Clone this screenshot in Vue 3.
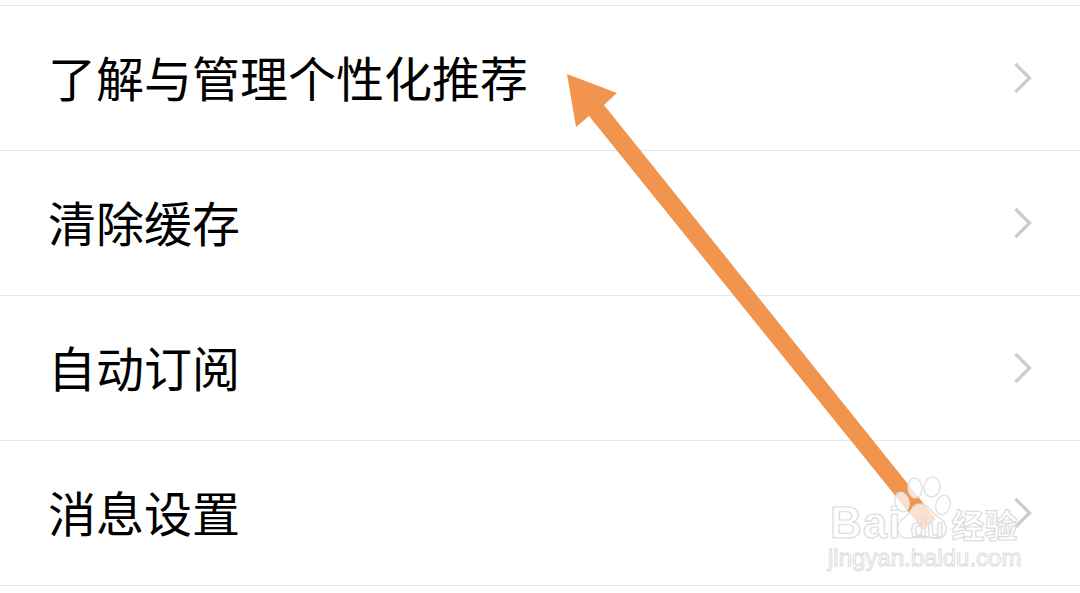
<script setup>
const rows = ['了解与管理个性化推荐', '清除缓存', '自动订阅', '消息设置']
</script>

<template>
  <div class="page">
    <ul class="list">
      <li v-for="row in rows" :key="row" class="row">
        <span class="label">{{ row }}</span>
        <svg class="chev" width="20" height="32" viewBox="0 0 20 32">
          <path d="M2.5 2 L16.5 16 L2.5 30" fill="none" stroke="#cdcdcd" stroke-width="3.4" />
        </svg>
      </li>
    </ul>

    <svg class="arrow" width="1080" height="593" viewBox="0 0 1080 593">
      <polygon points="567,74 617,93 604,105 936,519 923,530 589,116 576,127" fill="#f1954e" />
    </svg>

    <div class="mark">
      <svg class="paw" width="70" height="70" viewBox="0 0 70 70">
        <g fill="#ffffff" fill-opacity="0.72" stroke="#dedede" stroke-width="1.3">
          <ellipse cx="16" cy="26" rx="7" ry="10" transform="rotate(-15 16 26)" />
          <ellipse cx="29" cy="12" rx="7" ry="10" transform="rotate(-5 29 12)" />
          <ellipse cx="46" cy="11" rx="8" ry="10" transform="rotate(8 46 11)" />
          <ellipse cx="57" cy="29" rx="7" ry="10" transform="rotate(15 57 29)" />
          <path d="M34 28 C26 28 25 37 18 42 C8 49 10 62 22 62 C28 62 31 60 36 60 C42 60 46 63 52 62 C64 60 62 46 52 41 C45 37 44 28 34 28 Z" />
        </g>
      </svg>
      <div class="mark-top">
        <span class="bai">Bai</span>
        <span class="du">du</span>
        <span class="jy">经验</span>
      </div>
      <div class="mark-url">jingyan.baidu.com</div>
    </div>
  </div>
</template>

<style scoped>
.page {
  position: relative;
  width: 1080px;
  height: 593px;
  background: #fff;
  overflow: hidden;
  padding-top: 5px;
  box-sizing: border-box;
}
.list {
  list-style: none;
  margin: 0;
  padding: 0;
  border-top: 1px solid #e6e6e6;
}
.row {
  height: 144px;
  border-bottom: 1px solid #e6e6e6;
  display: flex;
  align-items: center;
  justify-content: space-between;
  padding: 0 47px 0 48px;
}
.label {
  font-family: "Noto Sans CJK SC", "Noto Sans", sans-serif;
  font-size: 48px;
  line-height: 1;
  color: #000;
  margin-top: -4px;
}
.chev {
  display: block;
}
.arrow {
  position: absolute;
  left: 0;
  top: 0;
}
.mark {
  position: absolute;
  left: 828px;
  top: 476px;
  width: 200px;
  height: 100px;
}
.paw {
  position: absolute;
  left: 58px;
  top: 0;
}
.mark-top {
  position: absolute;
  left: 2px;
  top: 24px;
  display: flex;
  align-items: baseline;
  font-family: "Liberation Sans", sans-serif;
  font-weight: 700;
  color: #fff;
  -webkit-text-stroke: 1.2px #dcdcdc;
}
.bai {
  font-size: 44px;
  line-height: 46px;
  letter-spacing: 1px;
}
.du {
  font-size: 27px;
  line-height: 46px;
  margin-left: 9px;
  color: transparent;
}
.jy {
  font-family: "Noto Sans CJK SC", sans-serif;
  font-size: 33px;
  line-height: 46px;
  margin-left: 8px;
}
.mark-url {
  position: absolute;
  left: 0;
  top: 69px;
  font-family: "Liberation Sans", sans-serif;
  font-size: 24px;
  line-height: 26px;
  color: #fff;
  -webkit-text-stroke: 1px #dcdcdc;
  white-space: nowrap;
}
</style>
